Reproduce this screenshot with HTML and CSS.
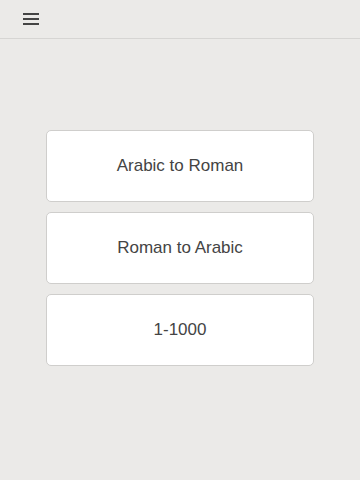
FILE: index.html
```html
<!DOCTYPE html>
<html lang="en">
<head>
    <meta charset="UTF-8">
    <meta name="viewport" content="width=device-width, initial-scale=1.0">
    <title>Roman Numerals</title>
    <link rel="stylesheet" href="styles.css">
</head>
<body>
    <div class="header">
        <span class="menu-icon">
            <svg width="16" height="13" viewBox="0 0 16 13">
                <rect x="0" y="0" width="16" height="2" fill="#444"/>
                <rect x="0" y="5" width="16" height="2" fill="#444"/>
                <rect x="0" y="10" width="16" height="2" fill="#444"/>
            </svg>
        </span>
    </div>

    <div class="container">
        <button class="mode-button">Arabic to Roman</button>
        <button class="mode-button">Roman to Arabic</button>
        <button class="mode-button">1-1000</button>
    </div>
</body>
</html>
```

FILE: styles.css
```css
body {
    font-family: 'Liberation Sans', Arial, sans-serif;
    margin: 0;
    padding: 0;
    background: #ebeae8;
    height: 480px;
}

.header {
    height: 38px;
    border-bottom: 1px solid #d6d5d3;
    display: flex;
    align-items: center;
    padding-left: 23px;
}

.menu-icon {
    display: flex;
    margin-top: 1px;
}

.container {
    display: flex;
    flex-direction: column;
    gap: 10px;
    padding: 91px 46px 0;
}

.mode-button {
    height: 72px;
    background: #fff;
    border: 1px solid #cfcecc;
    border-radius: 5px;
    font-family: inherit;
    font-size: 17px;
    color: #444;
    cursor: pointer;
}
```
